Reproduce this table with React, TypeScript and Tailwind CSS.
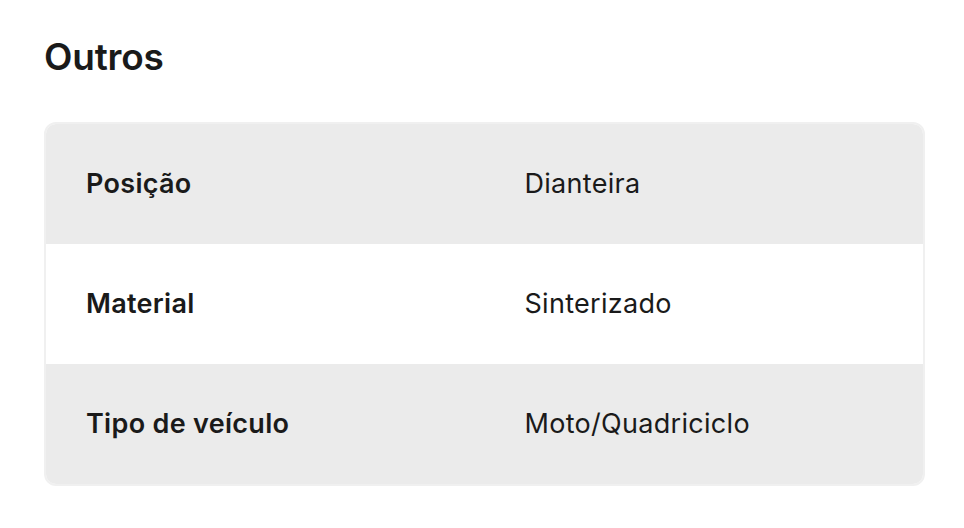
import React from "react";

const rows = [
  { label: "Posição", value: "Dianteira", shaded: true },
  { label: "Material", value: "Sinterizado", shaded: false },
  { label: "Tipo de veículo", value: "Moto/Quadriciclo", shaded: true },
];

export default function App() {
  return (
    <div
      className="w-[964px] h-[528px] bg-white text-[#1a1a1a]"
      style={{ fontFamily: "Inter, 'Open Sans', sans-serif" }}
    >
      <div className="pl-[44px] pr-[39px] pt-[34px]">
        <h2 className="text-[37px] leading-[46px] font-semibold tracking-[-0.2px]">Outros</h2>
        <div className="mt-[42px] rounded-[12px] border-2 border-[#f0f0f0] overflow-hidden">
          {rows.map((r) => (
            <div
              key={r.label}
              className={`grid grid-cols-2 h-[120px] items-center ${r.shaded ? "bg-[#ebebeb]" : "bg-white"}`}
            >
              <div className="pl-[40px] text-[27px] font-semibold tracking-[0.3px]">{r.label}</div>
              <div className="pl-[40px] text-[27px] tracking-[0.3px]">{r.value}</div>
            </div>
          ))}
        </div>
      </div>
    </div>
  );
}
